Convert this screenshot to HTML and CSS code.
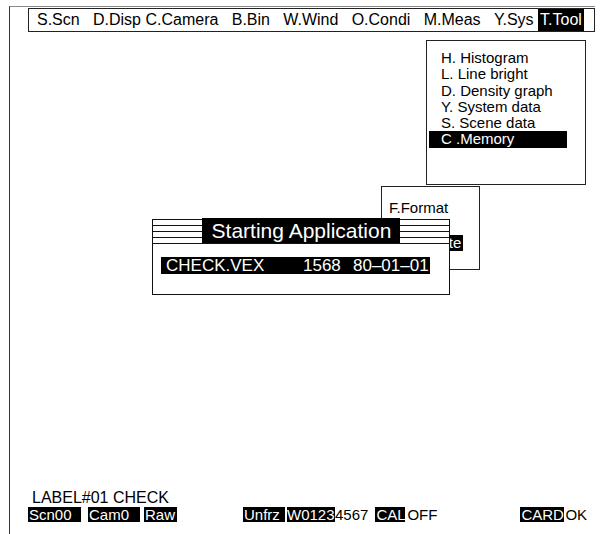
FILE: index.html
```html
<!DOCTYPE html>
<html>
<head>
<meta charset="utf-8">
<link rel="stylesheet" href="styles.css">
</head>
<body>
<div class="screen">
  <div class="menubar">
    <span class="mi">S.Scn</span>
    <span class="mi">D.Disp</span>
    <span class="mi near">C.Camera</span>
    <span class="mi">B.Bin</span>
    <span class="mi">W.Wind</span>
    <span class="mi">O.Condi</span>
    <span class="mi">M.Meas</span>
    <span class="mi">Y.Sys</span>
    <span class="mi near active">T.Tool</span>
  </div>

  <div class="dropdown">
    <div class="dd-item">H. Histogram</div>
    <div class="dd-item">L. Line bright</div>
    <div class="dd-item">D. Density graph</div>
    <div class="dd-item">Y. System data</div>
    <div class="dd-item">S. Scene data</div>
    <div class="dd-item selected">C .Memory</div>
  </div>

  <div class="submenu">
    <div class="sm-item">F.Format</div>
    <div class="sm-item">L.Load</div>
    <div class="sm-item sm-sel"><span class="sm-hl">D.Delete</span></div>
  </div>

  <div class="dialog">
    <div class="titlebar"><span class="title">Starting Application</span></div>
    <div class="file">
      <span class="f-name">CHECK.VEX</span>
      <span class="f-size">1568</span>
      <span class="f-date">80&ndash;01&ndash;01</span>
    </div>
  </div>

  <div class="status">
    <div class="label">LABEL#01 CHECK</div>
    <div class="srow">
      <span class="inv b-scn">Scn00</span>
      <span class="inv b-cam">Cam0</span>
      <span class="inv b-raw">Raw</span>
      <span class="inv b-unfrz">Unfrz</span>
      <span class="inv b-w">W0123</span><span class="plain">4567</span>
      <span class="inv b-cal">CAL</span><span class="plain p-off">OFF</span>
      <span class="inv b-card">CARD</span><span class="plain p-ok">OK</span>
    </div>
  </div>
</div>
</body>
</html>
```

FILE: styles.css
```css
html, body {
  margin: 0;
  padding: 0;
  background: #fff;
}
body {
  font-family: "Liberation Sans", Arial, sans-serif;
  color: #000;
  width: 604px;
  height: 534px;
  overflow: hidden;
}
.screen {
  position: relative;
  box-sizing: border-box;
  margin: 6px 0 0 9px;
  width: 586px;
  height: 528px;
  border-left: 1px solid #333;
  border-top: 1px solid #8a8a8a;
  display: flex;
  flex-direction: column;
}
.menubar {
  box-sizing: border-box;
  margin: 1px 0 0 18px;
  width: 567px;
  height: 24px;
  border: 1px solid #222;
  display: flex;
  align-items: center;
  gap: 13.3px;
  padding-left: 8px;
  font-size: 16px;
  line-height: 18px;
  white-space: nowrap;
}
.mi.near {
  margin-left: -8.8px;
}
.mi.active {
  align-self: stretch;
  background: #000;
  color: #fff;
  padding: 0 2px 0 2px;
  line-height: 22px;
}

/* Tool dropdown */
.dropdown {
  position: absolute;
  left: 416px;
  top: 33px;
  box-sizing: border-box;
  width: 160px;
  height: 145px;
  border: 1px solid #222;
  background: #fff;
  padding-top: 9px;
  font-size: 15px;
}
.dd-item {
  margin-left: 2px;
  width: 138px;
  padding-left: 12px;
  box-sizing: border-box;
  line-height: 16.3px;
  height: 16.3px;
  white-space: nowrap;
}
.dd-item.selected {
  background: #000;
  color: #fff;
}

/* Memory submenu (behind dialog) */
.submenu {
  position: absolute;
  left: 371px;
  top: 179px;
  box-sizing: border-box;
  width: 99px;
  height: 84px;
  border: 1px solid #222;
  background: #fff;
  padding-top: 12px;
  font-size: 15px;
}
.sm-item {
  padding-left: 7px;
  line-height: 18px;
  height: 18px;
  white-space: nowrap;
}
.sm-item.sm-sel {
  padding-left: 19px;
  line-height: 16px;
  height: 16px;
}
.sm-hl {
  display: inline-block;
  background: #000;
  color: #fff;
  padding: 0 2px;
}

/* Starting Application dialog */
.dialog {
  position: absolute;
  left: 142px;
  top: 212px;
  box-sizing: border-box;
  width: 298px;
  height: 76px;
  border: 1px solid #111;
  border-top: none;
  background: #fff;
}
.titlebar {
  height: 24px;
  border-bottom: 1px solid #111;
  background: repeating-linear-gradient(to bottom, #111 0 1px, #fff 1px 6px);
  display: flex;
  justify-content: center;
}
.title {
  background: #000;
  color: #fff;
  font-size: 21px;
  line-height: 25px;
  height: 25px;
  margin-top: -1px;
  padding: 0 9px 0 10px;
  white-space: nowrap;
}
.file {
  margin: 13px 0 0 8px;
  width: 269px;
  height: 17px;
  background: #000;
  color: #fff;
  font-size: 17px;
  line-height: 17px;
  display: flex;
  padding-left: 5px;
  box-sizing: border-box;
  white-space: nowrap;
}
.f-name { width: 137px; }
.f-size { width: 50px; }

/* status area */
.status {
  margin-top: auto;
  padding: 0 0 12px 18px;
  white-space: nowrap;
}
.label {
  padding-left: 4px;
  font-size: 16px;
  line-height: 17px;
}
.srow {
  display: flex;
  align-items: center;
  font-size: 15px;
  line-height: 15px;
  margin-top: 1px;
}
.inv {
  background: #000;
  color: #fff;
  padding-left: 1px;
  box-sizing: border-box;
}
.b-scn { width: 53px; }
.b-cam { width: 52px; margin-left: 7px; }
.b-raw { width: 33px; margin-left: 4px; }
.b-unfrz { width: 42px; margin-left: 66px; }
.b-w { width: 48px; margin-left: 2px; padding-left: 0; }
.b-cal { width: 30px; margin-left: 7px; }
.p-off { margin-left: 2px; }
.b-card { width: 44px; margin-left: 83px; }
.p-ok { margin-left: 1px; }
```
